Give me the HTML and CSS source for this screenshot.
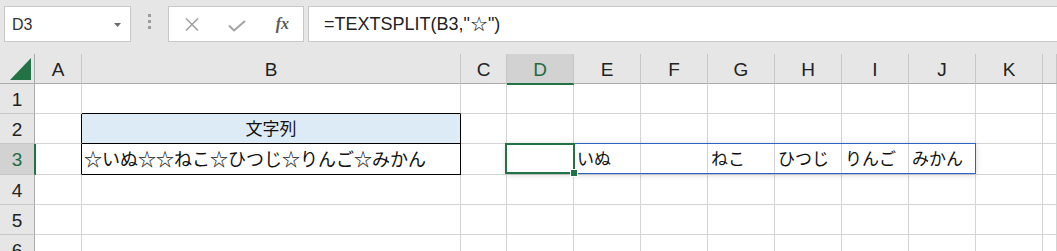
FILE: index.html
```html
<!DOCTYPE html>
<html lang="ja">
<head>
<meta charset="utf-8">
<title>TEXTSPLIT</title>
<link rel="stylesheet" href="styles.css">
</head>
<body>
<div class="app">
  <div class="fbar">
    <div class="namebox">
      <span class="nb-text">D3</span>
      <svg class="caret" width="7" height="4" viewBox="0 0 7 4"><path d="M0 0H7L3.5 4Z" fill="#6b6b6b"/></svg>
    </div>
    <div class="grip"><i></i><i></i><i></i></div>
    <div class="fxbtns">
      <svg class="ico-x" width="14" height="13" viewBox="0 0 14 13"><path d="M1 0.5L13 12.5M13 0.5L1 12.5" stroke="#a3a3a3" stroke-width="1.6" fill="none"/></svg>
      <svg class="ico-check" width="18" height="12" viewBox="0 0 18 12"><path d="M1 5.5L6 10.5L17 1" stroke="#a3a3a3" stroke-width="2" fill="none"/></svg>
      <span class="fx">fx</span>
    </div>
    <div class="formula">=TEXTSPLIT(B3,"☆")</div>
  </div>

  <div class="sheet">
    <!-- header row -->
    <div class="corner"><svg width="22" height="23" viewBox="0 0 22 23"><path d="M0 22H21V0Z" fill="#217346"/></svg></div>
    <div class="ch">A</div>
    <div class="ch">B</div>
    <div class="ch">C</div>
    <div class="ch sel">D</div>
    <div class="ch">E</div>
    <div class="ch">F</div>
    <div class="ch">G</div>
    <div class="ch">H</div>
    <div class="ch">I</div>
    <div class="ch">J</div>
    <div class="ch">K</div>
    <div class="ch last"></div>

    <!-- row 1 -->
    <div class="rh">1</div>
    <div class="c"></div>
    <div class="c bb"></div>
    <div class="c"></div>
    <div class="c"></div>
    <div class="c"></div>
    <div class="c"></div>
    <div class="c"></div>
    <div class="c"></div>
    <div class="c"></div>
    <div class="c"></div>
    <div class="c"></div>
    <div class="c"></div>

    <!-- row 2 -->
    <div class="rh">2</div>
    <div class="c br"></div>
    <div class="c title br bb">文字列</div>
    <div class="c"></div>
    <div class="c"></div>
    <div class="c"></div>
    <div class="c"></div>
    <div class="c"></div>
    <div class="c"></div>
    <div class="c"></div>
    <div class="c"></div>
    <div class="c"></div>
    <div class="c"></div>

    <!-- row 3 -->
    <div class="rh sel">3</div>
    <div class="c br"></div>
    <div class="c br bb wide">☆いぬ☆☆ねこ☆ひつじ☆りんご☆みかん</div>
    <div class="c"></div>
    <div class="c d3">
      <div class="spill"></div>
      <div class="selbox"><span class="handle"></span></div>
    </div>
    <div class="c">いぬ</div>
    <div class="c"></div>
    <div class="c">ねこ</div>
    <div class="c">ひつじ</div>
    <div class="c">りんご</div>
    <div class="c">みかん</div>
    <div class="c"></div>
    <div class="c"></div>

    <!-- row 4 -->
    <div class="rh">4</div>
    <div class="c"></div><div class="c"></div><div class="c"></div><div class="c"></div><div class="c"></div><div class="c"></div><div class="c"></div><div class="c"></div><div class="c"></div><div class="c"></div><div class="c"></div><div class="c"></div>

    <!-- row 5 -->
    <div class="rh">5</div>
    <div class="c"></div><div class="c"></div><div class="c"></div><div class="c"></div><div class="c"></div><div class="c"></div><div class="c"></div><div class="c"></div><div class="c"></div><div class="c"></div><div class="c"></div><div class="c"></div>

    <!-- row 6 -->
    <div class="rh">6</div>
    <div class="c"></div><div class="c"></div><div class="c"></div><div class="c"></div><div class="c"></div><div class="c"></div><div class="c"></div><div class="c"></div><div class="c"></div><div class="c"></div><div class="c"></div><div class="c"></div>
  </div>
</div>
</body>
</html>
```

FILE: styles.css
```css
* { box-sizing: border-box; }

html, body {
  margin: 0;
  padding: 0;
  background: #ffffff;
  overflow: hidden;
}

.app {
  width: 1057px;
  height: 251px;
  overflow: hidden;
  font-family: "Liberation Sans", Arial, sans-serif;
}

/* ---------- formula bar ---------- */
.fbar {
  height: 54px;
  background: #e6e6e6;
  display: flex;
  align-items: flex-start;
  padding: 6px 0 0 4px;
}

.namebox {
  width: 127px;
  height: 36px;
  background: #fff;
  border: 1px solid #c8c8c8;
  display: flex;
  align-items: center;
  justify-content: space-between;
  padding: 0 9px 0 7px;
}

.nb-text {
  font-size: 16px;
  color: #333;
  padding-top: 1px;
}

.caret { margin-top: 1px; }

.grip {
  width: 37px;
  height: 36px;
  display: flex;
  flex-direction: column;
  align-items: center;
  justify-content: center;
  gap: 3px;
  padding-bottom: 6px;
}

.grip i {
  display: block;
  width: 3px;
  height: 3px;
  background: #9c9c9c;
}

.fxbtns {
  width: 136px;
  height: 36px;
  background: #fff;
  border: 1px solid #c8c8c8;
  display: flex;
  align-items: center;
  padding: 0 14px 0 16px;
  justify-content: space-between;
}

.ico-x { margin-top: 1px; }
.ico-check { margin-top: 3px; }

.fx {
  font-family: "Liberation Serif", "Times New Roman", serif;
  font-style: italic;
  font-weight: bold;
  font-size: 16px;
  color: #5a5a5a;
  margin-top: -1px;
}

.formula {
  flex: 1;
  margin-left: 4px;
  margin-right: -4px;
  height: 36px;
  background: #fff;
  border: 1px solid #c8c8c8;
  border-right: none;
  display: flex;
  align-items: center;
  padding-left: 15px;
  font-size: 18px;
  color: #222;
}

/* ---------- grid ---------- */
.sheet {
  display: grid;
  grid-template-columns: 35px 47px 379px 46px repeat(8, 67px) 1fr;
  grid-template-rows: 30px 30px 30px 31px 30px 30px 30px;
}

.corner {
  background: #e6e6e6;
  border-right: 1px solid #ababab;
  border-bottom: 1px solid #ababab;
  padding: 4px 0 0 10px;
}
.corner svg { display: block; }

.ch {
  background: #e6e6e6;
  border-right: 1px solid #c6c6c6;
  border-bottom: 1px solid #ababab;
  display: flex;
  align-items: center;
  justify-content: center;
  font-size: 19px;
  color: #222;
  padding-top: 2px;
}

.ch.sel {
  background: #d2d2d2;
  color: #1e6b41;
  border-bottom: 1px solid #217346;
  box-shadow: 0 1px 0 #217346;
  position: relative;
  z-index: 2;
}

.rh {
  background: #e6e6e6;
  border-right: 1px solid #ababab;
  border-bottom: 1px solid #c6c6c6;
  display: flex;
  align-items: center;
  justify-content: center;
  font-size: 19px;
  color: #222;
  padding-top: 2px;
}

.rh.sel {
  background: #d2d2d2;
  color: #1e6b41;
  border-right: 1px solid #217346;
  box-shadow: 1px 0 0 #217346;
  position: relative;
  z-index: 2;
}

.c {
  border-right: 1px solid #d4d4d4;
  border-bottom: 1px solid #d4d4d4;
  font-family: "Noto Sans CJK JP", "Noto Sans", sans-serif;
  font-size: 17px;
  color: #111;
  white-space: nowrap;
  display: flex;
  align-items: center;
  padding: 0 0 3px 3px;
  line-height: 1;
}

.c.wide { font-size: 18px; padding-left: 2px; }

.c.br { border-right-color: #000; }
.c.bb { border-bottom-color: #000; }

.c.title {
  background: #ddebf7;
  justify-content: center;
  padding-left: 0;
}

/* active cell + spill range overlays */
.d3 { position: relative; }

.spill {
  position: absolute;
  left: -1px;
  top: -1px;
  width: 470px;
  height: 31px;
  border: 1px solid #2f62c4;
  box-shadow: 0 1px 6px rgba(0, 0, 0, 0.16);
  z-index: 3;
  pointer-events: none;
}

.selbox {
  position: absolute;
  left: -2px;
  top: -1px;
  width: 70px;
  height: 31px;
  border: 2px solid #217346;
  z-index: 4;
}

.handle {
  position: absolute;
  left: 64px;
  top: 25px;
  width: 6px;
  height: 6px;
  background: #217346;
  box-shadow: 0 0 0 1px #ffffff;
}
```
